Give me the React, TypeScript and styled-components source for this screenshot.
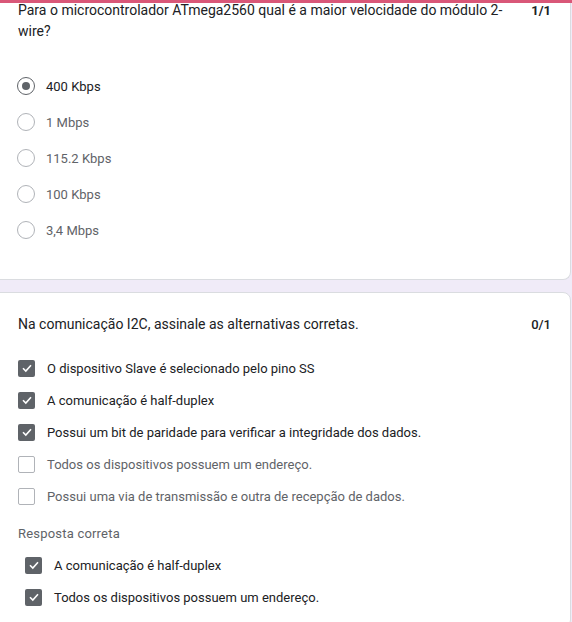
import styled, { createGlobalStyle } from "styled-components";

const GlobalStyle = createGlobalStyle`
  html, body {
    margin: 0;
    padding: 0;
    background: #f0ebf8;
    font-family: Roboto, "Liberation Sans", Arial, sans-serif;
    overflow: hidden;
  }
`;

type Option = { label: string; checked?: boolean };

const radioOptions: Option[] = [
  { label: "400 Kbps", checked: true },
  { label: "1 Mbps" },
  { label: "115.2 Kbps" },
  { label: "100 Kbps" },
  { label: "3,4 Mbps" },
];

const checkOptions: Option[] = [
  { label: "O dispositivo Slave é selecionado pelo pino SS", checked: true },
  { label: "A comunicação é half-duplex", checked: true },
  { label: "Possui um bit de paridade para verificar a integridade dos dados.", checked: true },
  { label: "Todos os dispositivos possuem um endereço." },
  { label: "Possui uma via de transmissão e outra de recepção de dados." },
];

const correctOptions = ["A comunicação é half-duplex", "Todos os dispositivos possuem um endereço."];

const CheckMark = () => (
  <svg width="12" height="12" viewBox="0 0 12 12">
    <path d="M2 6.2 L4.8 9 L10 3.2" fill="none" stroke="#fff" strokeWidth="1.6" />
  </svg>
);

const App = () => {
  return (
    <>
      <GlobalStyle />
      <TopBar />
      <Page>
        <Card $first>
          <Header>
            <Question $narrow>Para o microcontrolador ATmega2560 qual é a maior velocidade do módulo 2-wire?</Question>
            <Score $bold>1/1</Score>
          </Header>
          <RadioList>
            {radioOptions.map((o) => (
              <Row key={o.label}>
                <Radio $checked={o.checked}>{o.checked && <Dot />}</Radio>
                <Label $dark={o.checked}>{o.label}</Label>
              </Row>
            ))}
          </RadioList>
        </Card>
        <Card>
          <Header>
            <Question>Na comunicação I2C, assinale as alternativas corretas.</Question>
            <Score>0/1</Score>
          </Header>
          <CheckList>
            {checkOptions.map((o) => (
              <CheckRow key={o.label}>
                <Box $checked={o.checked}>{o.checked && <CheckMark />}</Box>
                <Label $dark={o.checked}>{o.label}</Label>
              </CheckRow>
            ))}
          </CheckList>
          <Subtitle>Resposta correta</Subtitle>
          <CorrectList>
            {correctOptions.map((label) => (
              <CheckRow key={label}>
                <Box $checked>
                  <CheckMark />
                </Box>
                <Label $dark>{label}</Label>
              </CheckRow>
            ))}
          </CorrectList>
        </Card>
      </Page>
    </>
  );
};

const TopBar = styled.div`
  position: fixed;
  top: 0;
  left: 0;
  right: 0;
  height: 3px;
  background: #d95778;
  z-index: 2;
`;

const Page = styled.div`
  display: flex;
  flex-direction: column;
  gap: 12px;
  margin-left: -12px;
  width: 583px;
`;

const Card = styled.div<{ $first?: boolean }>`
  background: #fff;
  border: 1px solid #dadce0;
  border-radius: 8px;
  padding: ${(p) => (p.$first ? "0" : "21px")} 19px 20px 29px;
  ${(p) => p.$first && "border-top-left-radius: 0; border-top-right-radius: 0; border-top: none; height: 280px; box-sizing: border-box;"}
`;

const Header = styled.div`
  display: flex;
  justify-content: space-between;
  align-items: flex-start;
`;

const Question = styled.div<{ $narrow?: boolean }>`
  font-size: 14px;
  line-height: 21px;
  color: #202124;
  ${(p) => p.$narrow && "width: 485px;"}
`;

const Score = styled.div<{ $bold?: boolean }>`
  font-size: 13px;
  line-height: 21px;
  color: #202124;
  font-weight: ${(p) => (p.$bold ? 700 : 500)};
`;

const RadioList = styled.div`
  display: flex;
  flex-direction: column;
  gap: 16px;
  margin-top: 34px;
`;

const Row = styled.div`
  display: flex;
  align-items: center;
  gap: 11px;
  height: 20px;
`;

const Radio = styled.div<{ $checked?: boolean }>`
  width: 18px;
  height: 18px;
  box-sizing: border-box;
  border-radius: 50%;
  border: 1.5px solid ${(p) => (p.$checked ? "#5f6368" : "#b0b3b8")};
  display: flex;
  align-items: center;
  justify-content: center;
  flex-shrink: 0;
  margin-left: -1px;
`;

const Dot = styled.div`
  width: 8px;
  height: 8px;
  border-radius: 50%;
  background: #5f6368;
`;

const Label = styled.span<{ $dark?: boolean }>`
  font-size: 13px;
  color: ${(p) => (p.$dark ? "#202124" : "#5f6368")};
`;

const CheckList = styled.div`
  display: flex;
  flex-direction: column;
  gap: 12px;
  margin-top: 23px;
`;

const CheckRow = styled.div`
  display: flex;
  align-items: center;
  gap: 12px;
  height: 20px;
`;

const Box = styled.div<{ $checked?: boolean }>`
  width: 17px;
  height: 17px;
  box-sizing: border-box;
  border-radius: 2px;
  background: ${(p) => (p.$checked ? "#5f6368" : "#fff")};
  border: ${(p) => (p.$checked ? "none" : "1.5px solid #b0b3b8")};
  display: flex;
  align-items: center;
  justify-content: center;
  flex-shrink: 0;
`;

const Subtitle = styled.div`
  font-size: 13px;
  color: #5f6368;
  margin-top: 20px;
  letter-spacing: 0.2px;
`;

const CorrectList = styled.div`
  display: flex;
  flex-direction: column;
  gap: 12px;
  margin-top: 14px;
  padding-left: 7px;
`;

export default App;
